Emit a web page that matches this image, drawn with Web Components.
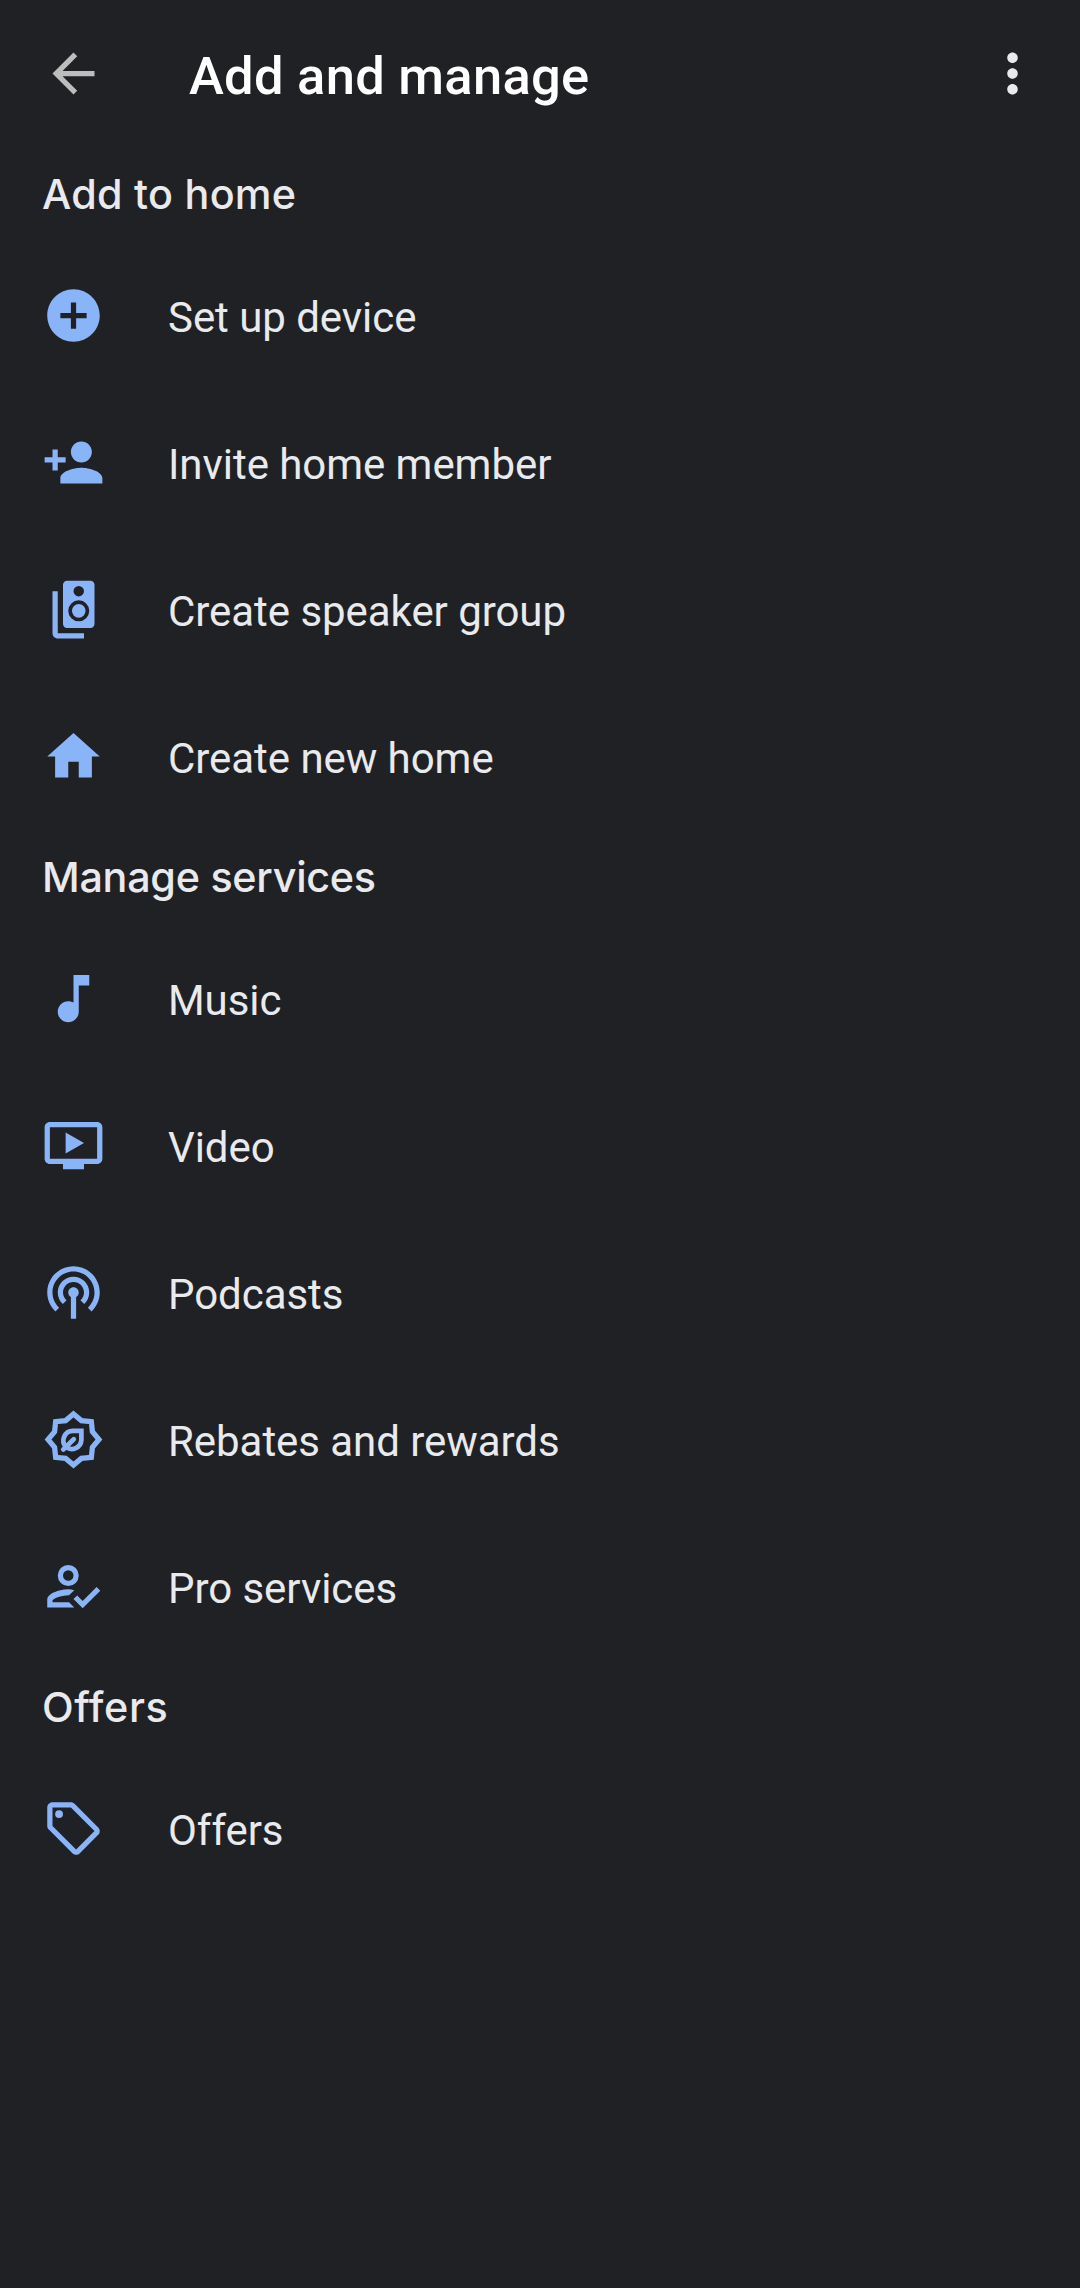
<!DOCTYPE html>
<html lang="en">
<head>
<meta charset="utf-8">
<title>Add and manage</title>
<style>
    body {
        margin: 0;
        min-height: 100vh;
        background-color: #202124;
        color: #e8eaed;
        font-family: Roboto, sans-serif;
    }
</style>
</head>
<body>
<manage-page>
    <top-bar slot="bar">Add and manage</top-bar>
    <list-section heading="Add to home" style="--tracking: 0.27px">
        <list-row icon="add">Set up device</list-row>
        <list-row icon="invite">Invite home member</list-row>
        <list-row icon="speakers">Create speaker group</list-row>
        <list-row icon="home">Create new home</list-row>
    </list-section>
    <list-section heading="Manage services" style="--tracking: -0.27px">
        <list-row icon="music">Music</list-row>
        <list-row icon="video">Video</list-row>
        <list-row icon="podcasts">Podcasts</list-row>
        <list-row icon="rewards">Rebates and rewards</list-row>
        <list-row icon="pro">Pro services</list-row>
    </list-section>
    <list-section heading="Offers" style="--tracking: 0.6px">
        <list-row icon="offers">Offers</list-row>
    </list-section>
</manage-page>

<script>
// All icons are drawn on a 24x24 grid
const ICONS = {
    back: `<path d="M20 11H7.83l5.59-5.59L12 4l-8 8 8 8 1.41-1.41L7.83 13H20v-2z"/>`,
    more: `<path d="M12 8c1.1 0 2-.9 2-2s-.9-2-2-2-2 .9-2 2 .9 2 2 2zm0 2c-1.1 0-2 .9-2 2s.9 2 2 2 2-.9 2-2-.9-2-2-2zm0 6c-1.1 0-2 .9-2 2s.9 2 2 2 2-.9 2-2-.9-2-2-2z"/>`,
    add: `<path d="M12 2C6.48 2 2 6.48 2 12s4.48 10 10 10 10-4.48 10-10S17.52 2 12 2zm5 11h-4v4h-2v-4H7v-2h4V7h2v4h4v2z"/>`,
    invite: `<path d="M15 12c2.21 0 4-1.79 4-4s-1.79-4-4-4-4 1.79-4 4 1.79 4 4 4zm-9-2V7H4v3H1v2h3v3h2v-3h3v-2H6zm9 4c-2.67 0-8 1.34-8 4v2h16v-2c0-2.66-5.33-4-8-4z"/>`,
    speakers: `
        <path fill-rule="evenodd" d="M18.5 1h-9C8.67 1 8 1.67 8 2.5v15c0 .83.67 1.5 1.5 1.5h9c.83 0 1.5-.67 1.5-1.5v-15c0-.83-.67-1.5-1.5-1.5zM14 3a2 2 0 1 1 0 4 2 2 0 0 1 0-4zm0 13.5a4 4 0 1 1 0-8 4 4 0 0 1 0 8z"/>
        <circle cx="14" cy="12.5" r="2.6"/>
        <path d="M6 5H4v16c0 1.1.89 2 2 2h10v-2H6V5z"/>`,
    home: `<path d="M10 20v-6h4v6h5v-8h3L12 3 2 12h3v8z"/>`,
    music: `<path d="M12 3v10.55c-.59-.34-1.27-.55-2-.55-2.21 0-4 1.79-4 4s1.79 4 4 4 4-1.79 4-4V7h4V3h-6z"/>`,
    video: `
        <path d="M21 3H3c-1.11 0-2 .89-2 2v12c0 1.1.89 2 2 2h5v2h8v-2h5c1.1 0 2-.9 2-2V5c0-1.11-.9-2-2-2zm0 14H3V5h18v12z"/>
        <path d="M9 7v8l7-4z"/>`,
    podcasts: `<path d="M14 12c0 .74-.4 1.38-1 1.72V22h-2v-8.28c-.6-.35-1-.98-1-1.72 0-1.1.9-2 2-2s2 .9 2 2zm-2-6c-3.31 0-6 2.69-6 6 0 1.74.75 3.31 1.94 4.4l1.42-1.42C8.53 14.25 8 13.19 8 12c0-2.21 1.79-4 4-4s4 1.79 4 4c0 1.19-.53 2.25-1.36 2.98l1.42 1.42C17.25 15.31 18 13.74 18 12c0-3.31-2.69-6-6-6zm0-4C6.48 2 2 6.48 2 12c0 2.85 1.2 5.41 3.11 7.24l1.42-1.42C4.98 16.36 4 14.29 4 12c0-4.41 3.59-8 8-8s8 3.59 8 8c0 2.29-.98 4.36-2.53 5.82l1.42 1.42C20.8 17.41 22 14.85 22 12c0-5.52-4.48-10-10-10z"/>`,
    rewards: `
        <g fill="none" stroke="currentColor">
            <path stroke-width="2" d="M12 2.3 15 4.8 18.8 5.2 19.2 9 21.7 12 19.2 15 18.8 18.8 15 19.2 12 21.7 9 19.2 5.2 18.8 4.8 15 2.3 12 4.8 9 5.2 5.2 9 4.8z"/>
            <path stroke-width="1.8" d="M15 8.7h-3.2a3.65 3.65 0 0 0-2.6 6.2 3.65 3.65 0 0 0 5.8-2.7z"/>
            <path stroke-width="1.8" stroke-linecap="round" d="M8.1 15.8l4-3.9"/>
        </g>`,
    pro: `
        <path fill-rule="evenodd" d="M10 11.8a4 4 0 1 0 0-8 4 4 0 0 0 0 8zm0-6a2 2 0 1 1 0 4 2 2 0 0 1 0-4z"/>
        <path d="M4 18v-.7c.3-.7 2.9-1.9 6.3-2l2-1.9c-.8-.25-1.6-.4-2.3-.4-2.67 0-8 1.34-8 4v3h10.3l-2-2z"/>
        <path d="M20.8 12.2l-5.3 5.3-2.1-2.1-1.4 1.4 3.5 3.5 6.7-6.7z"/>`,
    offers: `
        <path d="M21.41 11.58l-9-9C12.05 2.22 11.55 2 11 2H4c-1.1 0-2 .9-2 2v7c0 .55.22 1.05.59 1.42l9 9c.36.36.86.58 1.41.58s1.05-.22 1.41-.59l7-7c.37-.36.59-.86.59-1.41s-.23-1.06-.59-1.42zM13 20.01L4 11V4h7v-.01l9 9-7 7.02z"/>
        <circle cx="6.5" cy="6.5" r="1.5"/>`
};

customElements.define("line-icon",
class LineIcon extends HTMLElement {
    connectedCallback() {
        this.attachShadow({mode: "open"}).innerHTML = `
<style>
    :host {
        display: block;
        flex: none;
        width: 63px;
        height: 63px;
    }

    svg {
        display: block;
        width: 100%;
        height: 100%;
        fill: currentColor;
    }
</style>
<svg viewBox="0 0 24 24" aria-hidden="true">${ICONS[this.getAttribute("name")]}</svg>
        `;
    }
});

customElements.define("top-bar",
class TopBar extends HTMLElement {
    connectedCallback() {
        this.attachShadow({mode: "open"}).innerHTML = `
<style>
    :host {
        display: flex;
        align-items: center;
        box-sizing: border-box;
        height: 147px;
        padding: 0 36px 0 42px;
    }

    h1 {
        flex: 1;
        margin: 0;
        padding: 4px 0 0 84px;
        color: #fff;
        font-size: 52.5px;
        font-weight: 500;
        letter-spacing: 0.27px;
        line-height: 62px;
    }

    .back {
        color: #bdbdbd;
    }
</style>
<line-icon class="back" name="back"></line-icon>
<h1><slot></slot></h1>
<line-icon name="more"></line-icon>
        `;
    }
});

customElements.define("list-section",
class ListSection extends HTMLElement {
    connectedCallback() {
        this.attachShadow({mode: "open"}).innerHTML = `
<style>
    :host {
        display: block;
    }

    h2 {
        display: flex;
        align-items: center;
        box-sizing: border-box;
        height: 95px;
        margin: 0;
        padding: 0 42px 2px;
        font-family: Inter, sans-serif;
        font-size: 41.3px;
        font-weight: 500;
        letter-spacing: var(--tracking, 0);
    }
</style>
<h2>${this.getAttribute("heading")}</h2>
<slot></slot>
        `;
    }
});

customElements.define("list-row",
class ListRow extends HTMLElement {
    connectedCallback() {
        this.attachShadow({mode: "open"}).innerHTML = `
<style>
    :host {
        display: flex;
        align-items: center;
        gap: 63px;
        height: 147px;
        padding: 0 42px;
        font-size: 42px;
        letter-spacing: -0.05px;
    }

    line-icon {
        color: #8ab4f8;
    }

    span {
        padding-top: 4px;
    }
</style>
<line-icon name="${this.getAttribute("icon")}"></line-icon>
<span><slot></slot></span>
        `;
    }
});

customElements.define("manage-page",
class ManagePage extends HTMLElement {
    connectedCallback() {
        this.attachShadow({mode: "open"}).innerHTML = `
<style>
    :host {
        display: flex;
        flex-direction: column;
    }
</style>
<slot name="bar"></slot>
<slot></slot>
        `;
    }
});
</script>
</body>
</html>
